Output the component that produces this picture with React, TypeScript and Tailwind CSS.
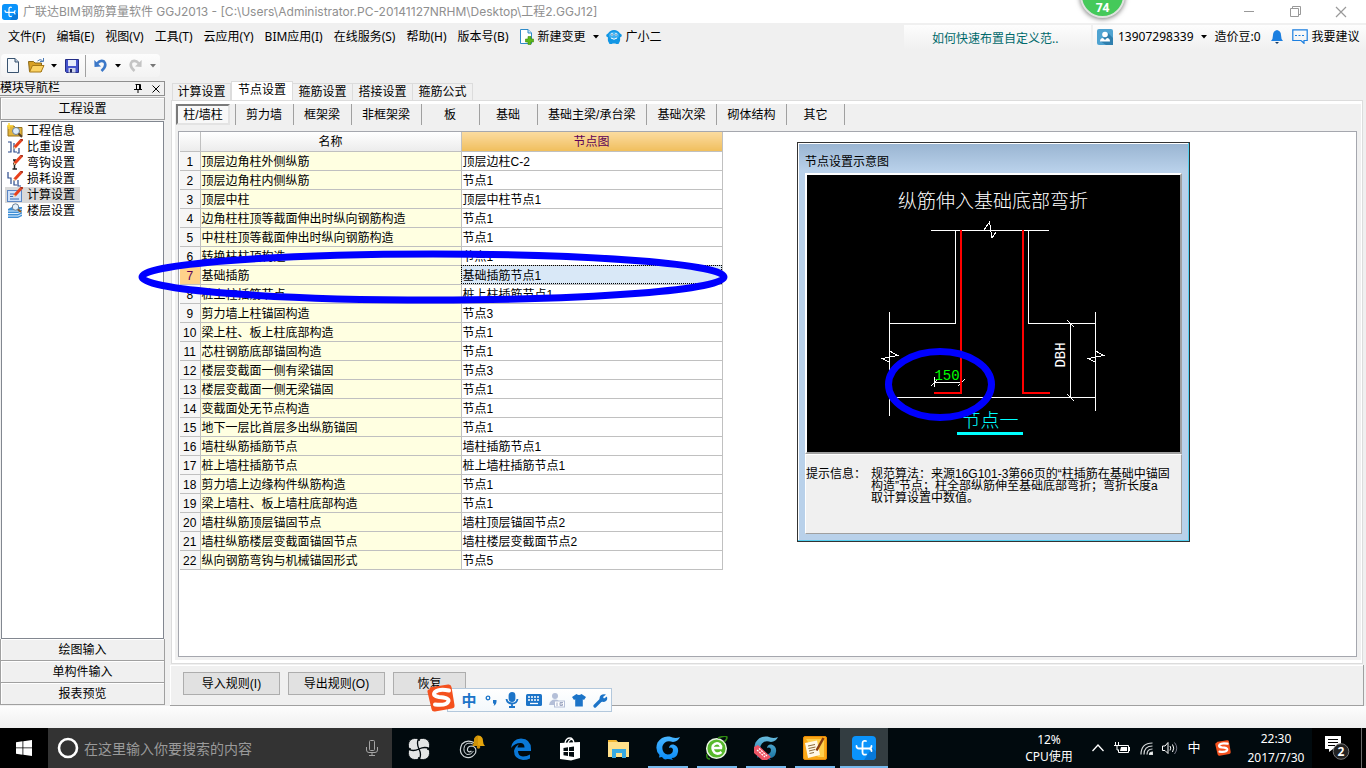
import { FC, ReactNode } from "react";

type RowData = { name: string; node: string };

const menus = [
  "文件(F)",
  "编辑(E)",
  "视图(V)",
  "工具(T)",
  "云应用(Y)",
  "BIM应用(I)",
  "在线服务(S)",
  "帮助(H)",
  "版本号(B)",
];

const tabs = ["计算设置", "节点设置", "箍筋设置", "搭接设置", "箍筋公式"];

const categories = [
  "剪力墙",
  "框架梁",
  "非框架梁",
  "板",
  "基础",
  "基础主梁/承台梁",
  "基础次梁",
  "砌体结构",
  "其它",
];

const rows: RowData[] = [
  { name: "顶层边角柱外侧纵筋", node: "顶层边柱C-2" },
  { name: "顶层边角柱内侧纵筋", node: "节点1" },
  { name: "顶层中柱", node: "顶层中柱节点1" },
  { name: "边角柱柱顶等截面伸出时纵向钢筋构造", node: "节点1" },
  { name: "中柱柱顶等截面伸出时纵向钢筋构造", node: "节点1" },
  { name: "转换柱柱顶构造", node: "节点1" },
  { name: "基础插筋", node: "基础插筋节点1" },
  { name: "桩上柱插筋节点", node: "桩上柱插筋节点1" },
  { name: "剪力墙上柱锚固构造", node: "节点3" },
  { name: "梁上柱、板上柱底部构造", node: "节点1" },
  { name: "芯柱钢筋底部锚固构造", node: "节点1" },
  { name: "楼层变截面一侧有梁锚固", node: "节点3" },
  { name: "楼层变截面一侧无梁锚固", node: "节点1" },
  { name: "变截面处无节点构造", node: "节点1" },
  { name: "地下一层比首层多出纵筋锚固", node: "节点1" },
  { name: "墙柱纵筋插筋节点", node: "墙柱插筋节点1" },
  { name: "桩上墙柱插筋节点", node: "桩上墙柱插筋节点1" },
  { name: "剪力墙上边缘构件纵筋构造", node: "节点1" },
  { name: "梁上墙柱、板上墙柱底部构造", node: "节点1" },
  { name: "墙柱纵筋顶层锚固节点", node: "墙柱顶层锚固节点2" },
  { name: "墙柱纵筋楼层变截面锚固节点", node: "墙柱楼层变截面节点2" },
  { name: "纵向钢筋弯钩与机械锚固形式", node: "节点5" },
];

/* ---------- icons ---------- */

const AppLogo: FC<{ size: number }> = ({ size }) => (
  <svg width={size} height={size} viewBox="0 0 24 24" className="shrink-0">
    <rect width="24" height="24" rx="4" fill="#0a93fb" />
    <path d="M12 24 L20 12 L24 15 V20 Q24 24 20 24 Z" fill="#0878d8" />
    <path
      d="M14 5 Q10.500 4 10.500 7.500 V16 Q10.500 19.500 14 18.500 M4.500 10 Q4.500 12.500 7 12.500 H17 Q19.500 12.500 19.500 10 M19.500 15 Q19.500 12.500 17 12.500"
      fill="none"
      stroke="#fff"
      strokeWidth="1.800"
      strokeLinecap="round"
    />
  </svg>
);

const Caret: FC<{ color?: string }> = ({ color = "#000" }) => (
  <svg width="6" height="4" viewBox="0 0 6 4" className="shrink-0">
    <path d="M0 0 H6 L3 3.500 Z" fill={color} />
  </svg>
);

const NewChangeIcon = () => (
  <svg width="16" height="18" viewBox="0 0 16 18">
    <path d="M1.500 1.500 H9 L12.500 5 V15.500 H1.500 Z" fill="#fff" stroke="#2f8bc9" />
    <path d="M9 1.500 V5 H12.500" fill="#cfe6f5" stroke="#2f8bc9" />
    <path d="M9 8.500 h3 v2.500 h2.500 v3 h-2.500 v2.500 h-3 v-2.500 h-2.500 v-3 h2.500 Z" fill="#5cb81a" stroke="#3c8c0c" strokeWidth=".6" />
  </svg>
);

const MascotIcon = () => (
  <svg width="16" height="16" viewBox="0 0 16 16">
    <path d="M2 4.500 Q4 1 8 1 Q12 1 14 4.500 Q16.500 5.500 15.500 7.500 L14 8.500 Q14.500 12 13.500 13 L12.500 15 H10 L9.500 14.500 H6.500 L6 15 H3.500 L2.500 13 Q1.500 12 2 8.500 L.5 7.500 Q-.5 5.500 2 4.500" fill="#1296e4" />
    <ellipse cx="8" cy="6.500" rx="5" ry="3.800" fill="#3fb0f0" />
    <circle cx="6" cy="5.500" r="1.300" fill="#fff" />
    <circle cx="10" cy="5.500" r="1.300" fill="#fff" />
    <path d="M6 5 v1.500 M10 5 v1.500" stroke="#0d4f86" strokeWidth=".9" />
    <path d="M5 9 Q8 11.500 11 9" fill="none" stroke="#fff" />
  </svg>
);

const FileIcon = () => (
  <svg width="12" height="15" viewBox="0 0 12 15">
    <path d="M.5 .5 H8 L11.500 4 V14.500 H.5 Z" fill="#f4f8fc" stroke="#39536f" />
    <path d="M8 .5 V4 H11.500" fill="#b8cce0" stroke="#39536f" />
  </svg>
);

const FolderIcon = () => (
  <svg width="17" height="15" viewBox="0 0 17 15">
    <path d="M.5 3.500 H5.500 L7 5 H13.500 V13.500 H1.500 Z" fill="#d8a024" stroke="#8b6a1a" />
    <path d="M1.500 14 L4.500 7.500 H16 L13 14 Z" fill="#fbd263" stroke="#a67816" />
    <path d="M9.500 3 Q12 .5 14.500 2.500 M15.500 0 V3.500 H12" fill="none" stroke="#4b79b4" />
  </svg>
);

const SaveIcon = () => (
  <svg width="14" height="14" viewBox="0 0 14 14">
    <path d="M.5 .5 H13.500 V13.500 H1.500 L.5 12.500 Z" fill="#4453cc" stroke="#232c86" />
    <rect x="3" y="1" width="8" height="6" fill="#e7ecfa" />
    <rect x="3.500" y="9" width="7" height="4.500" fill="#cdd3e8" />
    <rect x="5" y="10" width="2" height="3.500" fill="#1d2460" />
  </svg>
);

const UndoIcon: FC<{ color: string; flip?: boolean }> = ({ color, flip }) => (
  <svg width="13" height="13" viewBox="0 0 13 13" className={flip ? "-scale-x-100" : ""}>
    <path d="M3 4.500 Q6.500 .5 10 2.500 Q13.500 6.500 7.500 12" fill="none" stroke={color} strokeWidth="2.600" />
    <path d="M.3 1 L.5 8 L7 7.500 Z" fill={color} />
  </svg>
);

const Pencil = () => (
  <>
    <path d="M14 1.500 L7.500 8.500" stroke="#e8401c" strokeWidth="3" />
    <path d="M15.500 0 L14 1.500" stroke="#b02810" strokeWidth="3" />
    <path d="M7.500 7.500 L6 10.500 L8.800 9 Z" fill="#f3c98b" />
  </>
);

const navIcons: ReactNode[] = [
  <>
    <path d="M1 3 H7 L8 4.500 H15 V13 H1 Z" fill="#e3b53d" stroke="#98731b" />
    <path d="M2 0 V6 M0 3 H6" stroke="#ffd83a" strokeWidth="1.500" />
    <circle cx="9" cy="8" r="3.500" fill="#dcecfa" stroke="#6b7f96" />
    <path d="M11.500 10.500 L15 14" stroke="#55402a" strokeWidth="2" />
  </>,
  <>
    <path d="M1 3 H4 V13 H1 M7 4 V13 H10 M12 9 V14 H10" fill="none" stroke="#2b4a8c" strokeWidth="1.200" />
    <Pencil />
  </>,
  <>
    <path d="M6 5 H9 M7.500 5 V14 M5.500 14 H10 M6 9 H9" stroke="#222" strokeWidth="1.500" />
    <Pencil />
  </>,
  <>
    <path d="M1 1 V7 H4 V13 M7 9 V14 H10 M11 9 V15 H14" fill="none" stroke="#2b4a8c" strokeWidth="1.200" />
    <Pencil />
  </>,
  <>
    <rect x=".5" y="3.500" width="14" height="11" fill="#cfe2fa" stroke="#5b86c4" />
    <path d="M3 7 H7 M3 9.500 H6 M3 12 H12" stroke="#3c6cb0" />
    <Pencil />
  </>,
  <>
    <path d="M1 6 L5 4 H15 V13 L11 15 H1 Z" fill="#3f8fd6" />
    <path d="M1 8 H11 L15 6 M1 10.500 H11 L15 8.500 M1 13 H11 L15 11" fill="none" stroke="#dff0ff" />
    <circle cx="8.500" cy="4" r="3.200" fill="#e4f1fb" stroke="#6b7f96" />
    <path d="M11 6.500 L14 9" stroke="#8a5a24" strokeWidth="2" />
  </>,
];

const navLabels = ["工程信息", "比重设置", "弯钩设置", "损耗设置", "计算设置", "楼层设置"];

const SogouIcon: FC<{ size: number }> = ({ size }) => (
  <svg width={size} height={size} viewBox="0 0 28 28" className="relative z-10 shrink-0">
    <path d="M3 5 Q2 3 5 3 L21 .5 Q24 0 24.500 3 L27.500 21 Q28 24 25 24.500 L8 27.500 Q5 28 4.500 25 L.5 8 Q0 5.500 3 5" fill="#f4511e" />
    <path
      d="M22 6.500 Q12 4.500 8 8 Q5 12 12 13 Q22 13.500 21.500 17 Q20 22 8 20.500"
      fill="none"
      stroke="#fff"
      strokeWidth="4"
      strokeLinecap="round"
    />
  </svg>
);

const Swirl: FC<{ from: string; to: string; id: string; children?: ReactNode }> = ({ from, to, id, children }) => (
  <svg width="24" height="24" viewBox="0 0 24 24">
    <defs>
      <linearGradient id={id} x1="0" y1="0" x2="0" y2="1">
        <stop offset="0" stopColor={from} />
        <stop offset="1" stopColor={to} />
      </linearGradient>
    </defs>
    <path
      d="M24 1 Q22 5.500 17 6 Q9 3.500 6.500 10 Q5.500 17 11.500 18.500 Q17 18.500 17 13.500 Q16 10.500 13 12 Q13.500 8 17.500 8.500 Q23 10.500 22 16 Q21 22 15.500 22 L17 24 Q12 22.500 9 23.500 Q7 22.500 6 21 L3 21.500 L3.500 19 Q-1.500 14 1.500 6.500 Q6 -.5 13.500 .5 Q19 3 24 1"
      fill={`url(#${id})`}
    />
    {children}
  </svg>
);

/* ---------- taskbar ---------- */

type Task = { label: string; icon: ReactNode; open?: boolean; active?: boolean };

const tasks: Task[] = [
  {
    label: "风扇",
    icon: (
      <svg width="22" height="22" viewBox="0 0 22 22" fill="#e4e6e6" stroke="#020a0e" strokeWidth=".8" className="mr-2">
        <rect x=".5" y=".5" width="21" height="21" rx="6" />
        <path d="M11 0 Q8 5 11 11 Q14 17 11 22 M0 11 Q5 14 11 11 Q17 8 22 11" fill="none" strokeWidth="1.300" />
        <path d="M9 -1 L11 3 L13 -1 Z M9 23 L11 19 L13 23 Z M-1 9 L3 11 L-1 13 Z M23 9 L19 11 L23 13 Z" fill="#020a0e" />
      </svg>
    ),
  },
  {
    label: "消息",
    icon: (
      <svg width="28" height="26" viewBox="0 0 28 26" className="mb-1">
        <path d="M17 9 Q9 5 4 10 Q0 18 6 22.500 Q13 26 17.500 19 Q19 13 14 12 Q9 12 9.500 16.500 Q11 19 13.500 17" fill="none" stroke="#cfd5d8" strokeWidth="1.200" />
        <path d="M15 10 Q9 7.500 6.500 12 Q4.500 18 9 20.500 Q13 21.500 15.500 17" fill="none" stroke="#cfd5d8" />
        <path d="M14.500 12 Q16 10 16 7 Q16 2 20.500 1.500 Q25 2 25 7 Q25 10 27 12 Z" fill="#e5a50c" />
        <path d="M14.500 12 Q16 10 16 7 Q16 2 20 1.500 V12 Z" fill="#cf9208" />
        <circle cx="20.500" cy="13" r="1.800" fill="#c98b06" />
      </svg>
    ),
  },
  {
    label: "Edge",
    icon: (
      <svg width="22" height="24" viewBox="0 0 22 24">
        <path d="M1 11 Q2 2 11 1.500 Q21 2 21 12 V14 H8 Q8 19 13 19.500 Q17 19.500 20 17.500 V21.500 Q17 23 13 23 Q4 22 4 14 Q5 9 9 7.500 Q7.500 9 7.500 10.500 H14.500 Q14.500 6 10.500 6 Q5 6 1 11" fill="#0a78d7" />
      </svg>
    ),
  },
  {
    label: "应用商店",
    icon: (
      <svg width="22" height="24" viewBox="0 0 22 24">
        <path d="M6 6 Q7 1 11 1 Q14 1 15 6 M9 6 Q11 1 14 3" fill="none" stroke="#fff" strokeWidth="1.300" />
        <path d="M1 6 L21 5 V21 L12 23.500 L1 22 Z" fill="#fff" />
        <path d="M4.500 11 L9 10.300 V14 H4.500 Z M10 10.200 L15 9.500 V14 H10 Z M4.500 15 H9 V19 L4.500 18.300 Z M10 15 H15 V20 L10 19.200 Z" fill="#020a0e" />
      </svg>
    ),
  },
  {
    label: "文件资源管理器",
    icon: (
      <svg width="22" height="20" viewBox="0 0 22 20">
        <path d="M0 1 H8 L10 3 H21 V18 H0 Z" fill="#ffe08a" />
        <path d="M0 1 H8 L9.500 3 H0 Z" fill="#f2b632" />
        <path d="M4 10 H18 V19 H14 V14 H8 V19 H4 Z" fill="#37a9e1" />
      </svg>
    ),
  },
  { label: "浏览器", open: true, icon: <Swirl id="sw1" from="#49b6ff" to="#0a8cf8" /> },
  {
    label: "360浏览器",
    open: true,
    icon: (
      <svg width="24" height="24" viewBox="0 0 24 24">
        <circle cx="11.500" cy="12.500" r="9.800" fill="#57b92c" stroke="#eaf6e3" strokeWidth="1.500" />
        <path d="M16.500 16 Q13 19 9.500 16.500 Q6.500 13 8 9.500 Q11 6 14.500 8 Q16.500 10 16 12 H8" fill="none" stroke="#fff" strokeWidth="2.500" />
        <path d="M13 2 Q20 -1 22 1 Q22 4 19 6 M2 18 Q1 23 5 23" fill="none" stroke="#2f8a12" strokeWidth="1.500" />
      </svg>
    ),
  },
  {
    label: "算量",
    open: true,
    icon: (
      <Swirl id="sw2" from="#69bde0" to="#126f9e">
        <path d="M0 11 L4 9 L17 21 L13 24 H8 L0 17 Z" fill="#ee5565" />
        <path d="M3 14 L11 21 M5 12.500 L13 20" stroke="#fff" strokeWidth="1.200" strokeDasharray="2 1" />
      </Swirl>
    ),
  },
  {
    label: "笔记",
    open: true,
    icon: (
      <svg width="24" height="24" viewBox="0 0 24 24">
        <rect x=".5" y=".5" width="23" height="23" rx="1.500" fill="#f9a818" stroke="#e88a06" />
        <path d="M3 3 H21 V21 H15 Z" fill="#ffcf4c" />
        <path d="M2 7 L14 4.500 L17 19 L5 22 Z" fill="#fff8e6" />
        <path d="M5 10 L12 8.500 M5.500 12.500 L12.500 11 M6 15 L12 13.500 M6.500 17.500 L11 16.500" stroke="#8c6a3a" />
        <path d="M20.500 2 L13.500 14.500" stroke="#8a3d10" strokeWidth="2.500" />
      </svg>
    ),
  },
  { label: "GGJ2013", open: true, active: true, icon: <AppLogo size={24} /> },
];

const Taskbar = () => (
  <footer className="flex h-10 shrink-0 bg-[#010a0e] text-[12px] text-white">
    <button aria-label="开始" className="flex w-12 items-center justify-center bg-black">
      <svg width="16" height="16" viewBox="0 0 16 16" fill="#fff">
        <path d="M0 2.200 L6.500 1.300 V7.500 H0 Z M7.300 1.200 L16 0 V7.500 H7.300 Z M0 8.300 H6.500 V14.700 L0 13.800 Z M7.300 8.300 H16 V16 L7.300 14.800 Z" />
      </svg>
    </button>
    <label className="flex w-[344px] items-center bg-[#333333] pr-3 pl-2">
      <svg width="24" height="24" viewBox="0 0 24 24">
        <circle cx="12" cy="12" r="9" fill="none" stroke="#fff" strokeWidth="2.600" />
      </svg>
      <input
        type="text"
        aria-label="搜索"
        placeholder="在这里输入你要搜索的内容"
        className="ml-1 min-w-0 flex-1 bg-transparent text-[14px] outline-none placeholder:text-[#9a9a9a]"
      />
      <svg width="16" height="18" viewBox="0 0 16 18" fill="none" stroke="#a5a5a5">
        <rect x="5.500" y="1.500" width="5" height="10" rx="1" />
        <path d="M2.500 8 V11 Q2.500 13.500 5 13.500 H11 Q13.500 13.500 13.500 11 V8 M8 13.500 V16.500 M5 16.500 H11" />
      </svg>
    </label>
    <div className="ml-[7px] flex gap-px">
      {tasks.map((t) => (
        <button
          key={t.label}
          aria-label={t.label}
          className={`flex w-12 flex-col items-center ${t.active ? "bg-[#333d41]" : ""}`}
        >
          <span className="flex flex-1 items-center pt-[2px]">{t.icon}</span>
          {t.open && <span className={`h-[2px] bg-[#76b9ed] ${t.active ? "w-12" : "w-10"}`} />}
        </button>
      ))}
    </div>
    <div className="ml-auto flex items-stretch">
      <div className="w-[74px] pt-[3px] text-center leading-[17px]">
        <p>12%</p>
        <p>CPU使用</p>
      </div>
      <button aria-label="显示隐藏的图标" className="flex w-6 items-center justify-center">
        <svg width="12" height="8" viewBox="0 0 12 8" fill="none" stroke="#fff" strokeWidth="1.300">
          <path d="M.5 7 L6 1 L11.500 7" />
        </svg>
      </button>
      <button aria-label="电源" className="flex w-6 items-center justify-center">
        <svg width="16" height="12" viewBox="0 0 16 12">
          <path d="M1.500 0 V3 M4.500 0 V3 M0 3.500 H6 M3 3 V8 H5" stroke="#fff" fill="none" />
          <path d="M5.500 3.500 H14.500 V10.500 H4.500 V8" stroke="#fff" fill="none" />
          <path d="M7 5 H13 V9 H6 Z M15 5 h1 v4 h-1 Z" fill="#fff" />
        </svg>
      </button>
      <button aria-label="网络" className="flex w-6 items-center justify-center">
        <svg width="13" height="13" viewBox="0 0 13 13" fill="none" stroke="#d5d9da" strokeWidth="1.200">
          <path d="M1 12.500 Q1 1 12.500 1 M4 12.500 Q4 4 12.500 4 M7 12.500 Q7 7 12.500 7" />
          <path d="M9.500 12.500 Q9.500 10 12.500 10 V12.500 Z" fill="#fff" />
        </svg>
      </button>
      <button aria-label="音量" className="flex w-6 items-center justify-center">
        <svg width="16" height="14" viewBox="0 0 16 14" fill="none" stroke="#fff">
          <path d="M.5 5 H3 L6 1.500 V12.500 L3 9.500 H.5 Z M8 5 Q9.500 7 8 9.500 M10.500 3.500 Q13 7 10.500 11" />
          <path d="M12.500 1.500 Q17 7 12.500 13" stroke="#778" />
        </svg>
      </button>
      <button className="w-6 text-[13px]">中</button>
      <button aria-label="搜狗输入法" className="flex w-[34px] items-center justify-center">
        <SogouIcon size={16} />
      </button>
      <div className="w-[72px] pt-px text-center leading-[19px]">
        <p>22:30</p>
        <p>2017/7/30</p>
      </div>
      <button aria-label="通知" className="flex w-[50px] items-center justify-center border-r border-[#6a6a6a] bg-black">
        <svg width="26" height="26" viewBox="0 0 26 26">
          <path d="M1 1 H17 V14 H9 L5 17 V14 H1 Z" fill="#fff" />
          <path d="M4 4.500 H14 M4 7.500 H14 M4 10.500 H11" stroke="#000" />
          <circle cx="17" cy="16.500" r="7.800" fill="#222" stroke="#777" />
          <text x="17" y="21" fontSize="12" fontWeight="700" fill="#fff" textAnchor="middle">
            2
          </text>
        </svg>
      </button>
      <span className="w-1 bg-black" />
    </div>
  </footer>
);

/* ---------- window chrome ---------- */

const TitleBar = () => (
  <header className="relative flex h-[23px] shrink-0 items-center bg-white pl-[2px] text-[12px] text-[#8f8f8f]">
    <AppLogo size={16} />
    <h1 className="ml-[5px] font-['Inter','Noto_Sans_CJK_SC',sans-serif] whitespace-nowrap">
      广联达BIM钢筋算量软件 GGJ2013 - [C:\Users\Administrator.PC-20141127NRHM\Desktop\工程2.GGJ12]
    </h1>
    <div className="mr-[19px] ml-auto flex items-center gap-[34px]">
      <button aria-label="最小化" className="flex h-3 w-3 items-center">
        <span className="h-px w-[10px] bg-[#999]" />
      </button>
      <button aria-label="还原">
        <svg width="11" height="11" viewBox="0 0 11 11" fill="none" stroke="#999">
          <path d="M.5 2.500 H8.500 V10.500 H.5 Z M2.500 2.500 V.5 H10.500 V8.500 H8.500" />
        </svg>
      </button>
      <button aria-label="关闭">
        <svg width="12" height="12" viewBox="0 0 12 12" stroke="#999" strokeWidth="1.200">
          <path d="M1 1 L11 11 M11 1 L1 11" />
        </svg>
      </button>
    </div>
    {/* speed ball */}
    <div className="absolute -top-[27px] right-[241px] z-10 flex h-[45px] w-[45px] items-end justify-center rounded-full border-2 border-[#dfe3df] bg-[#45c95a] pb-px text-[12px] leading-[14px] font-bold text-white shadow-[0_1px_5px_#777]">
      74
    </div>
  </header>
);

const MenuBar = () => (
  <nav className="flex h-[27px] shrink-0 items-center pl-2 whitespace-nowrap">
    <div className="flex gap-[11px]">
      {menus.map((m) => (
        <button key={m}>{m}</button>
      ))}
    </div>
    <button className="ml-[10px] flex items-center">
      <NewChangeIcon />
      <span className="mr-[7px] ml-[3px]">新建变更</span>
      <Caret />
    </button>
    <button className="ml-[7px] flex items-center gap-1">
      <MascotIcon />
      广小二
    </button>
    <a
      href="#help"
      className="mr-[2px] ml-auto h-6 w-[187px] bg-linear-to-b from-[#fdfdfd] to-[#f0f0f0] pl-7 leading-[27px] text-[#00696b]"
    >
      如何快速布置自定义范..
    </a>
    <div className="flex h-6 w-[273px] items-center bg-linear-to-b from-[#fdfdfd] to-[#f0f0f0] pl-1">
      <svg width="16" height="16" viewBox="0 0 16 16">
        <rect width="16" height="16" rx="2" fill="#4fa3d1" />
        <path d="M11 4 L16 9 V16 H9 L3 12 Z" fill="#2f7fae" />
        <circle cx="8" cy="5.500" r="2.800" fill="#fff" />
        <path d="M3 12.500 Q3 9 6 9 L8 11 L10 9 Q13 9 13 12.500 Z" fill="#fff" />
      </svg>
      <button className="ml-[5px] flex items-center gap-[7px]">
        13907298339
        <Caret />
      </button>
      <span className="ml-2">造价豆:0</span>
      <button aria-label="提醒" className="ml-[10px]">
        <svg width="12" height="15" viewBox="0 0 12 15">
          <path d="M0 12 Q2 10 2 6 Q2 2 6 1 Q10 2 10 6 Q10 10 12 12 Z" fill="#1c7fe0" />
          <path d="M4 13 H8 L6 15 Z" fill="#123a66" />
        </svg>
      </button>
      <button className="ml-[9px] flex items-center gap-1">
        <svg width="16" height="15" viewBox="0 0 16 15" fill="none" stroke="#1c7fe0" strokeWidth="1.200">
          <path d="M9 11.500 H.8 V.8 H15.200 V11.500 H12 V14.300 L9 11.500" />
          <path d="M3 6.500 H13" strokeDasharray="2 1.500" />
        </svg>
        我要建议
      </button>
    </div>
  </nav>
);

const ToolBar = () => (
  <div className="flex h-[31px] shrink-0 items-start pt-1 pl-px">
    <div className="flex h-[23px] w-[159px] items-center rounded-sm bg-linear-to-b from-[#fdfdfd] to-[#f3f3f3] pl-[6px]">
      <button aria-label="新建"><FileIcon /></button>
      <button aria-label="打开" className="ml-[9px]"><FolderIcon /></button>
      <button aria-label="打开选项" className="ml-[6px]"><Caret /></button>
      <button aria-label="保存" className="ml-[8px]"><SaveIcon /></button>
      <span className="ml-[6px] h-[22px] w-px bg-[#a0a0a0]" />
      <button aria-label="撤销" className="ml-[8px]"><UndoIcon color="#3c78c8" /></button>
      <button aria-label="撤销选项" className="ml-[8px]"><Caret /></button>
      <button aria-label="恢复" className="ml-[8px]"><UndoIcon color="#c4c4c4" flip /></button>
      <button aria-label="恢复选项" className="ml-[8px]"><Caret color="#777" /></button>
    </div>
  </div>
);

const SideNav = () => (
  <aside className="flex w-[165px] shrink-0 flex-col">
    <div className="flex h-[15px] items-center border border-l-0 border-[#8f8f8f] leading-[13px]">
      <h2>模块导航栏</h2>
      <button aria-label="固定" className="mr-[10px] ml-auto">
        <svg width="8" height="9" viewBox="0 0 8 9" stroke="#000" fill="none">
          <path d="M1.500 .5 H6.500 M2.500 .5 V5 M5.500 .5 V5 M6.500 .5 V5 M0 5.500 H8 M4 5.500 V9" />
        </svg>
      </button>
      <button aria-label="关闭" className="mr-1">
        <svg width="8" height="8" viewBox="0 0 8 8" stroke="#000">
          <path d="M.5 .5 L7.500 7.500 M7.500 .5 L.5 7.500" />
        </svg>
      </button>
    </div>
    <button className="mt-px h-[23px] border border-[#a0a0a0] border-t-[#b8b8b8] pt-px shadow-[inset_1px_1px_0_#fff]">
      工程设置
    </button>
    <ul className="mt-px mr-px ml-px flex-1 border border-[#828790] bg-white pt-px pl-[3px]">
      {navLabels.map((label, i) => (
        <li key={label}>
          <button
            className={`flex h-4 w-[75px] items-center gap-1 pl-[2px] leading-4 whitespace-nowrap ${
              label === "计算设置" ? "bg-[#d9d9d9]" : ""
            }`}
          >
            <svg width="16" height="16" viewBox="0 0 16 16">{navIcons[i]}</svg>
            {label}
          </button>
        </li>
      ))}
    </ul>
    <div className="flex flex-col">
      {["绘图输入", "单构件输入", "报表预览"].map((label) => (
        <button key={label} className="h-[22px] border border-t-0 border-[#a0a0a0] pt-px shadow-[inset_1px_1px_0_#fff]">
          {label}
        </button>
      ))}
    </div>
    <span className="h-px" />
  </aside>
);

/* ---------- settings grid ---------- */

const NodeTable = () => (
  <div className="relative w-[542px] shrink-0 self-start">
    <table className="w-full table-fixed border-collapse leading-4">
      <thead>
        <tr className="h-[19px] bg-linear-to-b from-white to-[#ececec]">
          <th className="w-5 border border-t-0 border-l-0 border-[#c0c0c0]" />
          <th className="w-[261px] border border-t-0 border-[#c0c0c0] p-0 pt-[2px] font-normal">名称</th>
          <th className="w-[261px] border border-t-0 border-[#c0c0c0] bg-linear-to-b from-[#fbdb9f] to-[#f0bf5c] p-0 pt-[2px] font-normal text-[#5c0058]">
            节点图
          </th>
        </tr>
      </thead>
      <tbody>
        {rows.map((row, i) => {
          const selected = i === 6;
          return (
            <tr key={row.name} className="h-[19px]">
              <td
                className={`border border-l-0 border-[#c0c0c0] p-0 pt-[2px] text-center ${
                  selected ? "bg-[#ffd28a] text-[#5c0058]" : "bg-[#f6f6f6]"
                }`}
              >
                {i + 1}
              </td>
              <td className="border border-[#c0c0c0] bg-[#ffffe1] p-0 pt-[2px] pl-px whitespace-nowrap">
                {row.name}
              </td>
              <td
                className={`border border-[#c0c0c0] p-0 pt-[2px] pl-px whitespace-nowrap ${
                  selected ? "bg-[#d9e8f7] outline-1 -outline-offset-1 outline-dotted outline-black" : "bg-white"
                }`}
              >
                {row.node}
              </td>
            </tr>
          );
        })}
      </tbody>
    </table>
    {/* hand-drawn mark around row 7 */}
    <svg width="590" height="54" viewBox="0 0 590 54" className="pointer-events-none absolute top-[118px] -left-[42px]">
      <ellipse cx="295" cy="27" rx="291" ry="23" fill="none" stroke="#0000ff" strokeWidth="7" />
    </svg>
  </div>
);

const NodeDiagram = () => (
  <svg viewBox="0 0 373 277" className="block w-full bg-black">
    <text x="186" y="33" fontSize="19" fontWeight="300" fill="#fff" textAnchor="middle">
      纵筋伸入基础底部弯折
    </text>
    <g fill="none" stroke="#fff" strokeWidth="1" shapeRendering="crispEdges">
      <path d="M124 55.500 H242 M177 55 L182.500 47 L185 63 L189 57" />
      <path d="M148.500 55 V148.500 H83 M221.500 55 V148.500 H289" />
      <path d="M82.500 137 V241 M82.500 176 L91 180.500 L75 183.500 L82.500 187" />
      <path d="M288.500 137 V236 M288.500 176 L297 180.500 L281 183.500 L288.500 187" />
      <path d="M83 222.500 H289" />
      <path d="M263.500 148 V223 M260 145 L267 152 M260 219 L267 226" />
      <path d="M127 207.500 H155 M127.500 202 V212 M124 211 L131 204 M151 211 L158 204" />
    </g>
    <g fill="none" stroke="#ff0000" strokeWidth="2" shapeRendering="crispEdges">
      <path d="M154 55 V218 H127" />
      <path d="M216 55 V218 H243" />
    </g>
    <text x="140" y="205" fontSize="14" fill="#00ff00" textAnchor="middle" className="font-['Liberation_Mono',monospace]">
      150
    </text>
    <text
      x="258"
      y="180"
      fontSize="14"
      fill="#fff"
      textAnchor="middle"
      transform="rotate(-90 258 180)"
      className="font-['Liberation_Mono',monospace]"
    >
      DBH
    </text>
    <text x="183" y="252" fontSize="19" fontWeight="300" fill="#00ffff" textAnchor="middle">
      节点一
    </text>
    <path d="M150 258.500 H216" stroke="#00ffff" strokeWidth="3" />
    <ellipse cx="133" cy="209.500" rx="51.500" ry="33" fill="none" stroke="#0000ff" strokeWidth="7" />
  </svg>
);

const NodePreview = () => (
  <section className="mt-[10px] ml-[75px] flex h-[400px] w-[393px] shrink-0 flex-col border border-[#333] bg-linear-to-b from-[#99b4d1] to-[#b9d1ea] to-[28px] p-[7px] shadow-[inset_-1px_-1px_0_#55d0f0,inset_1px_1px_0_#fff]">
    <h2 className="h-[23px] pt-px leading-[23px]">节点设置示意图</h2>
    <div className="border-2 border-[#a0a0a0] border-t-white border-l-white">
      <NodeDiagram />
    </div>
    <div className="flex flex-1 items-start border border-[#a0a0a0] border-t-white border-l-white bg-[#f0f0f0] pt-[13px] leading-3 whitespace-nowrap">
      <span className="w-[65px] shrink-0">提示信息：</span>
      <p>
        规范算法：来源16G101-3第66页的“柱插筋在基础中锚固
        <br />
        构造”节点；柱全部纵筋伸至基础底部弯折；弯折长度a
        <br />
        取计算设置中数值。
      </p>
    </div>
  </section>
);

const ruleButtons = ["导入规则(I)", "导出规则(O)"];

const Content = () => (
  <main className="mr-[2px] ml-[5px] flex min-w-0 flex-1 flex-col">
    {/* tabs */}
    <div className="flex items-end pl-[2px]">
      {tabs.map((t) =>
        t === "节点设置" ? (
          <button key={t} className="h-[19px] w-[62px] border border-b-0 border-[#dcdcdc] bg-white pb-px leading-[17px]">
            {t}
          </button>
        ) : (
          <button key={t} className="h-[17px] w-[60px] border border-b-0 border-l-0 border-[#dcdcdc] leading-4 first:w-[59px] first:border-l">
            {t}
          </button>
        )
      )}
    </div>
    <div className="mx-px flex flex-1 flex-col border border-[#dcdcdc] bg-white p-[3px] pr-px">
      <div className="flex flex-1 flex-col bg-[#f0f0f0] px-[3px] pb-[3px]">
        <div className="-ml-[2px] flex h-[21px] items-stretch">
          <button className="mr-[5px] w-[54px] border-2 border-[#e3e3e3] border-t-[#7a7a7a] border-l-[#7a7a7a] bg-[#f8f8f8] whitespace-nowrap">
            柱/墙柱
          </button>
          <div className="flex border-l border-[#a0a0a0]">
            {categories.map((c) => (
              <button key={c} className="min-w-[58px] border-r border-[#a0a0a0] pt-px pr-[11px] pl-[10px] whitespace-nowrap">
                {c}
              </button>
            ))}
          </div>
        </div>
        <div className="mt-[6px] mr-px flex flex-1 items-start border border-[#a5a7ae] bg-white pl-px">
          <NodeTable />
          <NodePreview />
        </div>
      </div>
    </div>
    <div className="mt-px flex h-[41px] items-start gap-2 border-r border-b border-[#a0a0a0] pt-[7px] pl-[13px] shadow-[inset_1px_1px_0_#fff]">
      {ruleButtons.map((b) => (
        <button key={b} className="h-[23px] w-[97px] border border-[#adadad] bg-[#e1e1e1]">
          {b}
        </button>
      ))}
      <button className="h-[23px] w-[73px] border border-[#adadad] bg-[#e1e1e1]">恢复</button>
    </div>
  </main>
);

const InputMethodBar = () => (
  <div className="absolute bottom-[56px] left-[427px] flex items-end">
    <SogouIcon size={28} />
    <div className="-ml-2 flex h-6 w-[165px] items-center gap-[7px] border border-[#b3c8dc] bg-linear-to-b from-white to-[#f3f8fc] pl-[13px] text-[#1c74c8]">
      <button className="w-4 text-[15px] leading-4 font-bold">中</button>
      <svg width="14" height="14" viewBox="0 0 14 14">
        <circle cx="4" cy="5" r="1.800" fill="none" stroke="#1c74c8" strokeWidth="1.300" />
        <path d="M9 7 h3.500 q.5 4.500 -3 6 q1 -1.500 .5 -2.500 h-1 Z" fill="#1c74c8" />
      </svg>
      <svg width="14" height="16" viewBox="0 0 14 16" fill="none" stroke="#1c74c8" strokeWidth="1.800">
        <rect x="4.500" y="1" width="5" height="8" rx="2.500" fill="#1c74c8" />
        <path d="M1.500 7 Q2 11.500 7 11.500 Q12 11.500 12.500 7 M7 11.500 V15 M4 15 H10" />
      </svg>
      <svg width="16" height="12" viewBox="0 0 16 12">
        <rect width="16" height="12" rx="1.500" fill="#1c74c8" />
        <path d="M2 3 H14 M2 6 H14" stroke="#fff" strokeWidth="1.500" strokeDasharray="2 1" />
        <path d="M4 9.500 H12" stroke="#fff" strokeWidth="1.300" />
      </svg>
      <svg width="16" height="16" viewBox="0 0 16 16">
        <circle cx="6" cy="4" r="3" fill="#b4bfd8" />
        <path d="M0 13 Q1 7.500 6 7.500 Q11 7.500 11 13 Z" fill="#b4bfd8" />
        <rect x="5.500" y="9" width="10" height="6" fill="#fff" stroke="#b4bfd8" />
        <path d="M8 10.500 V14 M14 10.500 H11 V13.500 H13.500 V12 H11" fill="none" stroke="#a0aac4" />
      </svg>
      <svg width="14" height="14" viewBox="0 0 14 14" fill="#1c74c8">
        <path d="M4.500 1 Q7 3 9.500 1 L14 4 L12 7 L10.800 6.300 V13.500 H3.200 V6.300 L2 7 L0 4 Z" />
      </svg>
      <svg width="15" height="15" viewBox="0 0 15 15">
        <path d="M2 13 L8 7" stroke="#1c74c8" strokeWidth="3.200" strokeLinecap="round" />
        <path d="M13 1.500 L10 4 L11 5.500 L14 3.500 Q15 8 11 9 Q7 9 6.500 5.500 Q7 .5 13 1.500" fill="#1c74c8" />
      </svg>
    </div>
  </div>
);

const App = () => {
  return (
    <div className="relative flex min-h-screen flex-col overflow-hidden bg-[#f0f0f0] font-['Noto_Sans','Noto_Sans_CJK_SC',sans-serif] text-[12px] text-black">
      <TitleBar />
      <MenuBar />
      <ToolBar />
      <div className="flex flex-1 items-stretch font-['Liberation_Sans','Noto_Sans_CJK_SC',sans-serif]">
        <SideNav />
        <Content />
      </div>
      {/* status strip */}
      <div className="h-[22px] shrink-0 bg-linear-to-b from-[#fdfdfd] to-[#f0f0f0]" />
      <Taskbar />
      <InputMethodBar />
    </div>
  );
};

export default App;
